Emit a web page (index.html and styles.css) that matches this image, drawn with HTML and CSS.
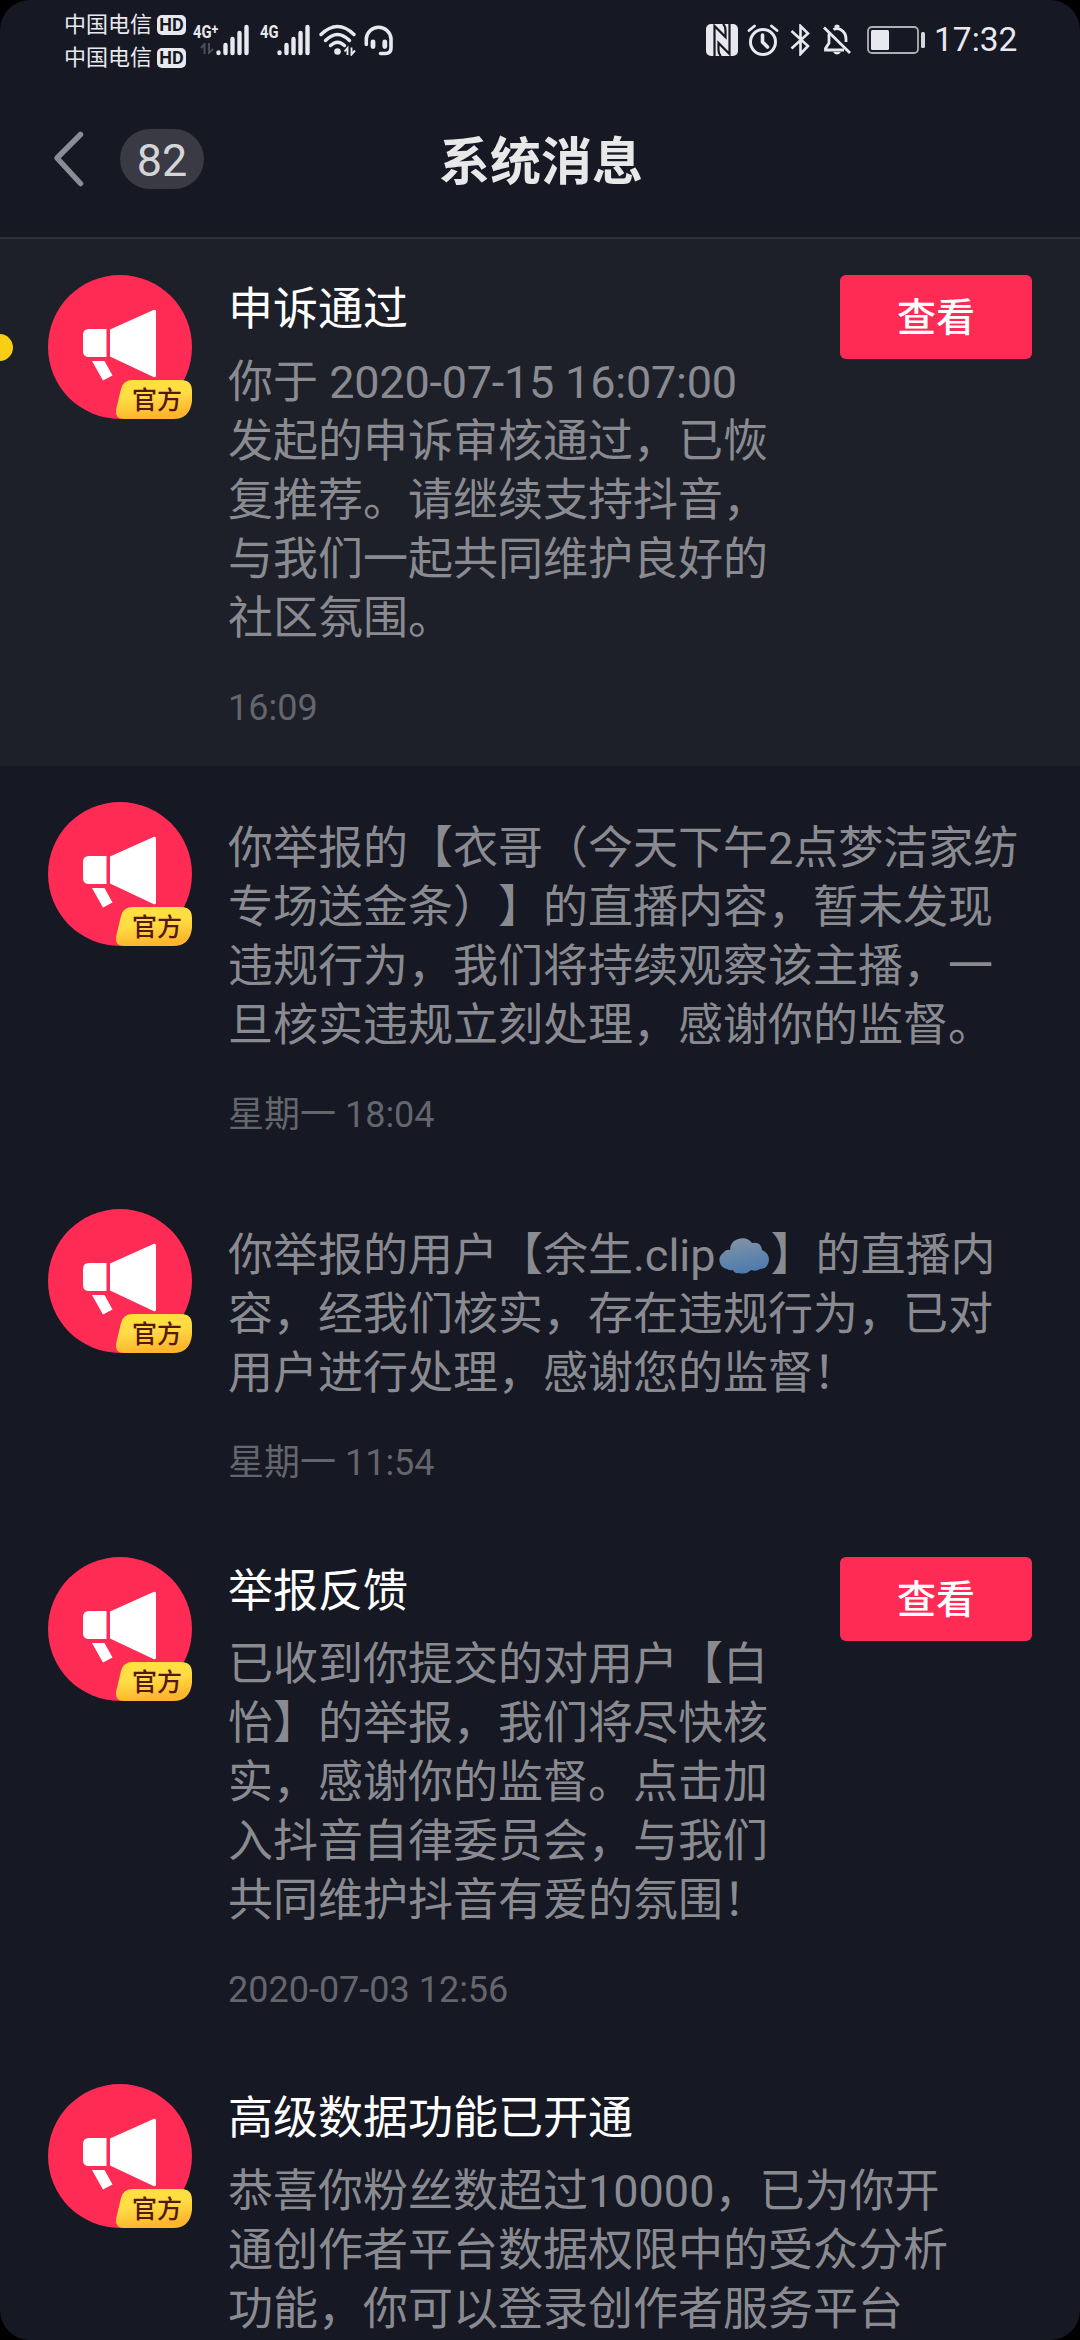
FILE: index.html
```html
<!DOCTYPE html>
<html lang="zh-CN">
<head>
<meta charset="utf-8">
<title>系统消息</title>
<link rel="stylesheet" href="styles.css">
</head>
<body>
<svg class="defs" aria-hidden="true">
  <defs>
    <linearGradient id="gold" x1="0" y1="0" x2="0.25" y2="1">
      <stop offset="0" stop-color="#ffe23d"/>
      <stop offset="0.5" stop-color="#ffdc45"/>
      <stop offset="1" stop-color="#fdb62c"/>
    </linearGradient>
    <linearGradient id="sky" x1="0" y1="0" x2="0.3" y2="1">
      <stop offset="0" stop-color="#8795a4"/>
      <stop offset="1" stop-color="#4e7caf"/>
    </linearGradient>
    <symbol id="megaphone" viewBox="0 0 144 144">
      <circle cx="72" cy="72" r="72" fill="#fe2c55"/>
      <path d="M41 54H58.500V82H41Q35 82 35 76V60Q35 54 41 54Z" fill="#fff"/>
      <path d="M62 54.500 105.500 35Q108 34 108 36.500V100.500Q108 103 105.500 102L62 81.500Z" fill="#fff"/>
      <path d="M44 86H56.500L64.500 100.500 55 105.500Z" fill="#fff"/>
      <path d="M85 105H133Q144 105 144 116V126Q142 144 125 144H76Q67 144 68 135L73 114Q75 105 85 105Z" fill="url(#gold)"/>
    </symbol>
    <symbol id="bars" viewBox="0 0 33 32">
      <path d="M2.500 29V28.500M9.500 29V21M16.500 29V15M23.500 29V9M30.500 29V3" stroke="#e8e9ef" stroke-width="4.400" stroke-linecap="round" fill="none"/>
    </symbol>
  </defs>
</svg>
<main class="screen">
  <div class="status">
    <div class="carriers">
      <div class="carrier">中国电信<span class="hd">HD</span></div>
      <div class="carrier">中国电信<span class="hd">HD</span></div>
    </div>
    <div class="signal first">
      <div class="net">4G<sup>+</sup></div>
      <svg class="arrows" viewBox="0 0 14 11"><path d="M4.500 11V1L1 5M9 0V10L13 6" stroke="#4a4c56" stroke-width="2" fill="none"/></svg>
      <svg class="strength"><use href="#bars"/></svg>
    </div>
    <div class="signal second">
      <div class="net">4G</div>
      <svg class="strength"><use href="#bars"/></svg>
    </div>
    <svg class="wifi" viewBox="0 0 38 32">
      <g fill="none" stroke="#e8e9ef" stroke-width="3.400" stroke-linecap="round">
        <path d="M2 10.500Q18.500-5.500 35 10.500"/><path d="M6.500 16.500Q18.500 4.500 30.500 16.500"/><path d="M11.500 21.500Q18.500 15 25.500 21.500"/>
      </g>
      <circle cx="18.500" cy="27.500" r="3.300" fill="#e8e9ef"/>
      <path d="M28.500 31V24L25.500 27.500M32.500 23.500V30.500L36 26.500" fill="none" stroke="#e8e9ef" stroke-width="1.900"/>
    </svg>
    <svg class="headset" viewBox="0 0 30 32">
      <path d="M2.300 20.500V14.500A12.400 12.400 0 0 1 27 14.500V24Q27 29.500 21.500 29.500H16.500" fill="none" stroke="#e8e9ef" stroke-width="3.600" stroke-linecap="round"/>
      <path d="M9 18V22.500M20.800 18V22.500" stroke="#e8e9ef" stroke-width="4.800" stroke-linecap="round"/>
    </svg>
    <div class="tray">
      <svg class="nfc" viewBox="0 0 32 32">
        <rect x="0" y="0" width="32" height="32" rx="5" fill="#e8e9ef"/>
        <path d="M8.500 32V2L19.500 13V6.500Q19.500 2 17 0M23.500 0V30L12.500 19V26Q12.500 30 15 32" fill="none" stroke="#161823" stroke-width="2.200"/>
      </svg>
      <svg class="alarm" viewBox="0 0 32 32">
        <circle cx="16" cy="18" r="12.500" fill="none" stroke="#e8e9ef" stroke-width="3"/>
        <path d="M2 6.500 7.500 2M30 6.500 24.500 2" stroke="#e8e9ef" stroke-width="2.800" stroke-linecap="round"/>
        <path d="M15.500 11V18L20.500 23" fill="none" stroke="#e8e9ef" stroke-width="3.600" stroke-linecap="round"/>
      </svg>
      <svg class="bluetooth" viewBox="0 0 20 32">
        <path d="M1.500 7 18 22 10.500 30V2L18 9.500 1.500 24.500" fill="none" stroke="#e8e9ef" stroke-width="2.600"/>
      </svg>
      <svg class="mute" viewBox="0 0 30 32">
        <path d="M7 9.500V19L3.500 24.500V26H22M11.500 5.500Q15 3.500 18.500 5.500Q24 8.500 24 15V18" fill="none" stroke="#e8e9ef" stroke-width="2.800"/>
        <path d="M13 3Q15 .5 17 3" fill="none" stroke="#e8e9ef" stroke-width="2.500"/>
        <path d="M11 28H19Q15 33 11 28Z" fill="#e8e9ef"/>
        <path d="M2 3.500 28 29" stroke="#e8e9ef" stroke-width="2.800"/>
      </svg>
      <svg class="battery" viewBox="0 0 58 28">
        <rect x="1" y="1" width="50" height="26" rx="4" fill="none" stroke="#aeb0b6" stroke-width="1.800"/>
        <rect x="4" y="4" width="18" height="20" rx="1.500" fill="#e8e9ef"/>
        <rect x="54" y="6" width="4" height="16" rx="1.500" fill="#d5d6db"/>
      </svg>
      <span class="clock">17:32</span>
    </div>
  </div>

  <header class="bar">
    <svg class="back" viewBox="0 0 34 58"><path d="M28.500 4.500 5 28 28.500 53.500" fill="none" stroke="#8b8c94" stroke-width="5.500" stroke-linecap="round" stroke-linejoin="round"/></svg>
    <span class="count">82</span>
    <h1 class="heading">系统消息</h1>
  </header>

  <section class="list">
    <article class="item unread">
      <div class="avatar"><svg><use href="#megaphone"/></svg><span class="official">官方</span></div>
      <div class="content">
        <h2 class="title">申诉通过</h2>
        <p class="body">你于 <span class="stamp">2020-07-15 16:07:00</span><br>发起的申诉审核通过，已恢<br>复推荐。请继续支持抖音，<br>与我们一起共同维护良好的<br>社区氛围。</p>
        <time class="time">16:09</time>
      </div>
      <button class="view">查看</button>
    </article>
    <article class="item plain">
      <div class="avatar"><svg><use href="#megaphone"/></svg><span class="official">官方</span></div>
      <div class="content">
        <p class="body">你举报的【衣哥（今天下午2点梦洁家纺<br>专场送金条）】的直播内容，暂未发现<br>违规行为，我们将持续观察该主播，一<br>旦核实违规立刻处理，感谢你的监督。</p>
        <time class="time">星期一 18:04</time>
      </div>
    </article>
    <article class="item plain">
      <div class="avatar"><svg><use href="#megaphone"/></svg><span class="official">官方</span></div>
      <div class="content">
        <p class="body">你举报的用户【余生.clip<svg class="cloud" viewBox="0 0 52 36"><path d="M9 31A9 9 0 0 1 5 15Q8 11 12 12Q12 4 19 1.500Q29-2 34 5Q43 3 44 12Q51 15 51 22Q50 31 42 31Q38 34 33 32Q28 37 21 35Q17 36 15 32Q12 33 9 31Z" fill="url(#sky)"/></svg>】的直播内<br>容，经我们核实，存在违规行为，已对<br>用户进行处理，感谢您的监督！</p>
        <time class="time">星期一 11:54</time>
      </div>
    </article>
    <article class="item">
      <div class="avatar"><svg><use href="#megaphone"/></svg><span class="official">官方</span></div>
      <div class="content">
        <h2 class="title">举报反馈</h2>
        <p class="body">已收到你提交的对用户【白<br>怡】的举报，我们将尽快核<br>实，感谢你的监督。点击加<br>入抖音自律委员会，与我们<br>共同维护抖音有爱的氛围！</p>
        <time class="time">2020-07-03 12:56</time>
      </div>
      <button class="view">查看</button>
    </article>
    <article class="item">
      <div class="avatar"><svg><use href="#megaphone"/></svg><span class="official">官方</span></div>
      <div class="content">
        <h2 class="title">高级数据功能已开通</h2>
        <p class="body">恭喜你粉丝数超过10000，已为你开<br>通创作者平台数据权限中的受众分析<br>功能，你可以登录创作者服务平台</p>
      </div>
    </article>
  </section>
</main>
</body>
</html>
```
FILE: styles.css
```css
* { box-sizing: border-box; }

body {
  margin: 0;
  background: #000;
  font-family: Roboto, "Noto Sans CJK SC", sans-serif;
  text-spacing-trim: space-all;
  color: #fff;
}

svg { display: block; }

.defs { position: absolute; width: 0; height: 0; }

.screen {
  position: relative;
  display: flex;
  flex-direction: column;
  width: 1080px;
  height: 2340px;
  overflow: hidden;
  border-radius: 30px;
  background: #161823;
}

/* status bar */
.status {
  flex: none;
  display: flex;
  align-items: flex-start;
  height: 80px;
  padding: 8px 63px 0 64px;
  color: #e8e9ef;
}

.carriers { width: 129px; }

.carrier {
  display: flex;
  align-items: center;
  height: 33px;
  font-size: 22px;
  line-height: 33px;
  white-space: nowrap;
}

.hd {
  width: 29px;
  height: 20px;
  margin-left: 5px;
  border-radius: 5px;
  background: #e8e9ef;
  color: #161823;
  font-size: 18px;
  font-weight: 700;
  line-height: 20px;
  text-align: center;
}

.signal {
  display: grid;
  height: 32px;
  margin-top: 16px;
}

.signal.first { grid-template: 19px 13px / 23px 33px; width: 67px; }
.signal.second { grid-template: 19px 13px / 17px 33px; width: 59px; }

.net {
  font-size: 18px;
  font-weight: 700;
  line-height: 16px;
  white-space: nowrap;
  transform: scaleX(.82);
  transform-origin: left;
}

.net sup { font-size: 15px; line-height: 0; vertical-align: 4px; }

.arrows { grid-area: 2 / 1; width: 14px; height: 11px; margin-left: 7px; }

.strength { grid-area: 1 / 2 / 3 / 3; width: 33px; height: 32px; }

.wifi { width: 38px; height: 32px; margin-top: 16px; }
.headset { width: 30px; height: 32px; margin: 16px 0 0 7px; }

.tray {
  display: flex;
  align-items: center;
  height: 32px;
  margin: 16px 0 0 auto;
}

.nfc { width: 32px; height: 32px; }
.alarm { width: 32px; height: 32px; margin-left: 9px; }
.bluetooth { width: 20px; height: 32px; margin-left: 11px; }
.mute { width: 30px; height: 32px; margin-left: 12px; }
.battery { width: 58px; height: 28px; margin-left: 15px; }

.clock {
  width: 83px;
  margin-left: 9px;
  font-size: 33.500px;
  line-height: 34px;
  white-space: nowrap;
}

/* title bar */
.bar {
  flex: none;
  display: grid;
  grid-template-columns: 34px 84px 1fr;
  column-gap: 34px;
  align-items: center;
  height: 159px;
  padding: 0 52px 0 52px;
  border-bottom: 2px solid #2e3039;
}

.back { width: 34px; height: 58px; }

.count {
  height: 60px;
  border-radius: 30px;
  background: #393a44;
  color: #d4d4d9;
  font-size: 45px;
  line-height: 64px;
  text-align: center;
}

.heading {
  margin: 8px 0 0 201px;
  color: #e8e8e9;
  font-size: 51px;
  font-weight: 700;
  line-height: 60px;
  white-space: nowrap;
}

/* messages */
.item {
  position: relative;
  display: flex;
  padding: 36px 48px 32px;
}

.unread { background: #1d2029; }

.unread::before {
  content: "";
  position: absolute;
  left: -14px;
  top: 95px;
  width: 27px;
  height: 27px;
  border-radius: 50%;
  background: #face15;
}

.avatar {
  flex: none;
  position: relative;
  width: 144px;
  height: 144px;
  margin-right: 36px;
}

.avatar svg { width: 144px; height: 144px; }

.official {
  position: absolute;
  left: 84px;
  top: 107px;
  color: #54180f;
  font-size: 25px;
  font-weight: 500;
  line-height: 37px;
}

.content { flex: 1; min-width: 0; padding-top: 2px; white-space: nowrap; }

.title {
  height: 73px;
  margin: 0 0 3px;
  font-size: 45px;
  font-weight: 400;
  line-height: 66px;
}

.body {
  margin: 0;
  color: #8a8b91;
  font-size: 45px;
  line-height: 59px;
}

.stamp { letter-spacing: -.22px; }

.plain .body { padding-top: 15px; }

.time {
  display: block;
  margin-top: 35px;
  color: #64666d;
  font-size: 36px;
  line-height: 51px;
}

.cloud {
  display: inline-block;
  width: 52px;
  height: 36px;
  margin: 0 1px 0 2px;
  vertical-align: -3px;
}

.view {
  flex: none;
  width: 192px;
  height: 84px;
  padding: 3px 0 0;
  border: 0;
  border-radius: 6px;
  background: #fe2c55;
  color: #fff;
  font: 500 39px/81px Roboto, "Noto Sans CJK SC", sans-serif;
}
```
